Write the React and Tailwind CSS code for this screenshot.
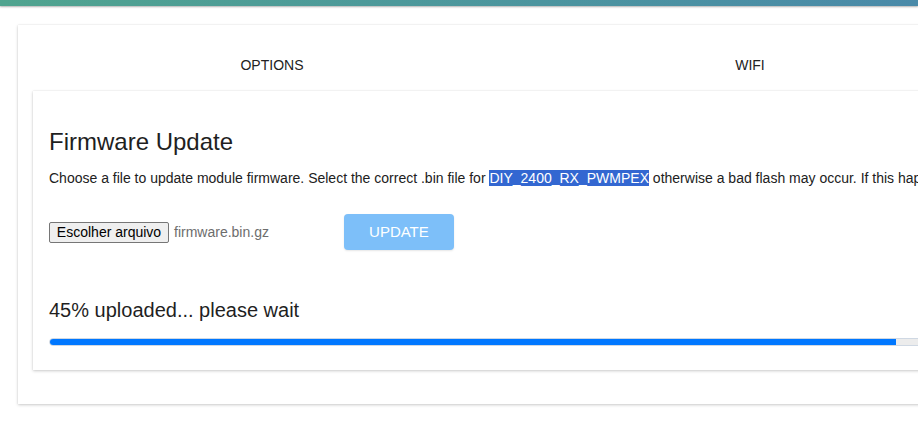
import React from 'react';

const tabs = ['Options', 'Wifi'];

const App = () => {
  return (
    <div className="w-[918px] h-[423px] overflow-hidden bg-white font-['Liberation_Sans',Arial,sans-serif] text-[#212121]">
      <div className="h-[6px] bg-gradient-to-r from-[#50a48f] to-[#4a8aa9] shadow-[0_1px_2px_rgba(0,0,0,0.3)]" />

      <div className="ml-[18px] mt-[19px] w-[1300px] bg-white px-[15px] pt-[16px] pb-[34px] shadow-[0_1px_3px_rgba(0,0,0,0.2),0_0_1px_rgba(0,0,0,0.12)]">
        <div className="flex h-[48px] items-center">
          {tabs.map((t) => (
            <div key={t} className="w-[478px] shrink-0 text-center text-[14px] uppercase text-[#222]">
              {t}
            </div>
          ))}
        </div>

        <div className="mt-[2px] bg-white px-[16px] pt-[37px] pb-[24px] shadow-[0_1px_3px_rgba(0,0,0,0.2),0_0_1px_rgba(0,0,0,0.12)]">
          <h2 className="text-[24px] leading-[28px] text-[#1f1f1f]">Firmware Update</h2>
          <p className="mt-[13px] text-[14px] leading-[18px] whitespace-nowrap">
            Choose a file to update module firmware. Select the correct .bin file for{' '}
            <span className="bg-[#3367d1] text-white">DIY_2400_RX_PWMPEX</span> otherwise a bad
            flash may occur. If this happens you will need to recover via USB/Serial.
          </p>

          <div className="mt-[27px] flex items-center">
            <button className="h-[21px] w-[120px] rounded-[2px] border border-[#767676] bg-[#efefef] text-[14px] leading-none text-black">
              Escolher arquivo
            </button>
            <span className="ml-[5px] text-[14px] text-[#6d6d6d]">firmware.bin.gz</span>
            <button className="ml-[75px] h-[36px] w-[110px] rounded-[4px] bg-[#7dbff9] text-[15px] uppercase text-white shadow-[0_1px_2px_rgba(0,0,0,0.1)]">
              Update
            </button>
          </div>

          <p className="mt-[48px] text-[20px] leading-[24px] text-[#1f1f1f]">45% uploaded... please wait</p>

          <div className="mt-[16px] h-[8px] w-[1230px] overflow-hidden rounded-l-full border border-[#cfd8e3] bg-[#ececec]">
            <div className="h-full w-[846px] bg-[#0077ff]" />
          </div>
        </div>
      </div>
    </div>
  );
};

export default App;
